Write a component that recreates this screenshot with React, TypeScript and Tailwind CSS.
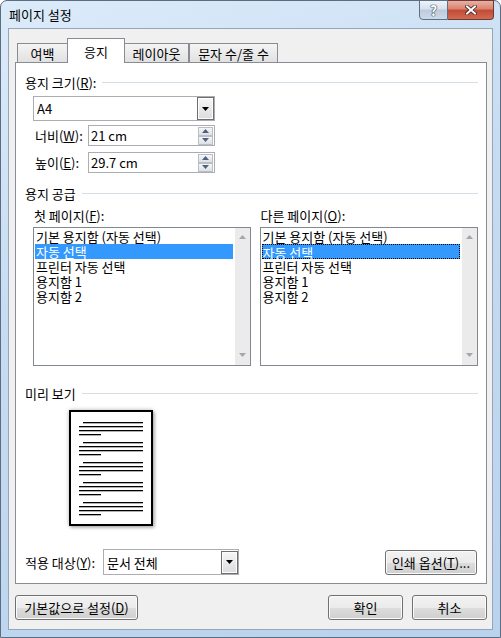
import React from "react";

const FONT = "font-['Noto_Sans_CJK_KR','Noto_Sans',sans-serif]";

const btn =
  "flex items-center justify-center h-[25px] rounded-[3px] border border-[#707070] bg-[linear-gradient(to_bottom,#f2f2f2_0%,#ebebeb_50%,#dddddd_51%,#cfcfcf_100%)] shadow-[inset_0_0_0_1px_#fbfbfb] leading-[15px]";

const paperItems = ["기본 용지함 (자동 선택)", "자동 선택", "프린터 자동 선택", "용지함 1", "용지함 2"];

function Arrow({ up = false, color = "#000" }: { up?: boolean; color?: string }) {
  return (
    <svg width="7" height="4" viewBox="0 0 7 4">
      <path d={up ? "M0 4h7L3.5 0z" : "M0 0h7L3.5 4z"} fill={color} />
    </svg>
  );
}

function GroupHeader({ children, className = "" }: { children: React.ReactNode; className?: string }) {
  return (
    <div className={`flex items-center h-[15px] ${className}`}>
      <span className="leading-[15px] whitespace-nowrap">{children}</span>
      <div className="ml-[6px] flex-1 h-px bg-[#d5dfe5]" />
    </div>
  );
}

function ComboBox({ value, className = "" }: { value: string; className?: string }) {
  return (
    <div className={`flex items-center h-[25px] border border-[#abadb3] bg-white ${className}`}>
      <span className="flex-1 pl-[3px] leading-[15px]">{value}</span>
      <div className="w-[17px] h-[23px] border border-[#6f6f6f] bg-[linear-gradient(to_bottom,#f7f7f7,#dcdcdc)] shadow-[inset_0_0_0_1px_#fdfdfd] flex items-center justify-center">
        <Arrow />
      </div>
    </div>
  );
}

function SpinBox({ value }: { value: string }) {
  const half =
    "h-[9px] border border-[#b8bfc9] bg-[linear-gradient(to_bottom,#f6f6f6,#e0e0e0)] flex items-center justify-center";
  return (
    <div className="flex w-[127px] h-[21px] border border-[#abadb3] bg-white">
      <span className="flex-1 pl-[2px] leading-[19px]">{value}</span>
      <div className="flex flex-col justify-center w-[15px] mr-px">
        <div className={half}>
          <Arrow up color="#4d6185" />
        </div>
        <div className={half}>
          <Arrow color="#4d6185" />
        </div>
      </div>
    </div>
  );
}

function ListBox({ focus = false, className = "" }: { focus?: boolean; className?: string }) {
  return (
    <div className={`flex h-[139px] border border-[#828790] bg-white ${className}`}>
      <div className="flex-1 pt-px pl-px">
        {paperItems.map((t, i) => (
          <div
            key={t}
            className={`h-[15px] leading-[15px] whitespace-nowrap ${
              i === 1 ? "bg-[#3399ff] text-white" : ""
            } ${i === 1 && focus ? "border border-dotted border-black leading-[13px]" : "pl-px"}`}
          >
            {t}
          </div>
        ))}
      </div>
      <div className="w-[15px] ml-[2px] bg-[#ebebeb] flex flex-col justify-between items-center pt-[7px] pb-[8px]">
        <Arrow up color="#a6a6a6" />
        <Arrow color="#a6a6a6" />
      </div>
    </div>
  );
}

function PagePreview() {
  return (
    <div className="ml-[44px] w-[84px] h-[116px] border-2 border-black bg-white shadow-[0_0_4px_rgba(0,0,0,0.3),2px_2px_3px_rgba(0,0,0,0.2)] pt-[10px] pl-[8px] flex flex-col gap-[7px]">
      {[0, 1, 2, 3, 4].map((g) => (
        <div key={g} className="flex flex-col gap-[3px]">
          <div className="ml-[4px] w-[60px] h-px bg-black shadow-[0_1px_0_#b0b0b0]" />
          <div className="w-[64px] h-px bg-black shadow-[0_1px_0_#b0b0b0]" />
          <div className="w-[64px] h-px bg-black shadow-[0_1px_0_#b0b0b0]" />
          <div className="w-[22px] h-px bg-black shadow-[0_1px_0_#b0b0b0]" />
        </div>
      ))}
    </div>
  );
}

export default function App() {
  const tabBase = "flex items-center justify-center border-[#898c95] leading-[15px]";
  const tabOff = "h-[19px] border-t bg-[linear-gradient(to_bottom,#f4f4f4,#e1e1e1)]";
  return (
    <div className={`w-[501px] h-[638px] bg-white ${FONT} text-[13px] text-black`}>
      <div className="w-full h-full flex flex-col rounded-t-[7px] border border-[#5c6d82] bg-[linear-gradient(160deg,#dcebfa_0%,#c6dcf2_40%,#b9d2ed_100%)]">
        {/* title bar */}
        <div className="flex items-start h-[27px]">
          <span className="ml-[8px] mt-[6px] leading-[16px]">페이지 설정</span>
          <div className="ml-auto mr-[6px] -mt-px flex h-[20px]">
            <div className="w-[29px] h-full border border-[#5f6f86] rounded-bl-[4px] bg-[linear-gradient(to_bottom,#eef3f9_0%,#d6e1ed_45%,#bccbdc_50%,#cddaea_100%)] flex items-center justify-center">
              <span className="text-white font-bold text-[14px] leading-none [text-shadow:0_0_1px_#2d3846,0_0_1px_#2d3846,0_0_1px_#2d3846]">
                ?
              </span>
            </div>
            <div className="w-[46px] h-full border border-l-0 border-[#6b3a33] rounded-br-[4px] bg-[linear-gradient(to_bottom,#eab0a3_0%,#d9826f_45%,#c24a34_50%,#d26a52_100%)] flex items-center justify-center">
              <svg width="12" height="10" viewBox="0 0 12 10">
                <path d="M2 1.5l8 7M10 1.5l-8 7" stroke="#3b2320" strokeWidth="3.6" strokeLinecap="square" />
                <path d="M2 1.5l8 7M10 1.5l-8 7" stroke="#fff" strokeWidth="2" strokeLinecap="square" />
              </svg>
            </div>
          </div>
        </div>

        {/* client area */}
        <div className="ml-[7px] w-[485px] h-[602px] border border-[#97a5b7] bg-[#f0f0f0] flex flex-col px-[6px] pt-[9px]">
          <div className="flex items-end h-[24px] pl-[2px]">
            <div className={`${tabBase} ${tabOff} w-[50px] border-l`}>여백</div>
            <div className={`${tabBase} relative z-10 h-[25px] -mb-px w-[58px] border-l border-t border-r bg-white`}>
              응지
            </div>
            <div className={`${tabBase} ${tabOff} w-[64px] border-r`}>레이아웃</div>
            <div className={`${tabBase} ${tabOff} w-[89px] border-l border-r`}>문자 수/줄 수</div>
          </div>

          <div className="w-[472px] h-[522px] border border-[#898c95] bg-white pl-[9px] pr-[8px] flex flex-col">
            <GroupHeader className="mt-[12px]">
              용지 크기(<u>R</u>):
            </GroupHeader>
            <ComboBox value="A4" className="mt-[6px] ml-[8px] w-[182px]" />
            <div className="mt-[4px] ml-[10px] flex items-center">
              <span className="w-[53px] leading-[15px]">
                너비(<u>W</u>):
              </span>
              <SpinBox value="21 cm" />
            </div>
            <div className="mt-[6px] ml-[10px] flex items-center">
              <span className="w-[53px] leading-[15px]">
                높이(<u>E</u>):
              </span>
              <SpinBox value="29.7 cm" />
            </div>

            <GroupHeader className="mt-[13px]">용지 공급</GroupHeader>
            <div className="mt-[7px] ml-[8px] flex gap-[9px]">
              <div className="w-[218px] flex flex-col">
                <span className="ml-px leading-[15px]">
                  첫 페이지(<u>F</u>):
                </span>
                <ListBox className="mt-[4px]" />
              </div>
              <div className="w-[219px] flex flex-col">
                <span className="ml-px leading-[15px]">
                  다른 페이지(<u>O</u>):
                </span>
                <ListBox focus className="mt-[4px]" />
              </div>
            </div>

            <GroupHeader className="mt-[20px]">미리 보기</GroupHeader>
            <div className="mt-[9px]">
              <PagePreview />
            </div>

            <div className="mt-[23px] flex items-center">
              <span className="w-[78px] leading-[15px]">
                적용 대상(<u>Y</u>):
              </span>
              <ComboBox value="문서 전체" className="w-[136px] h-[26px]" />
              <div className={`${btn} ml-auto mr-px w-[92px]`}>
                인쇄 옵션(<u>T</u>)...
              </div>
            </div>
          </div>

          <div className="mt-[11px] w-[472px] flex">
            <div className={`${btn} w-[123px]`}>
              기본값으로 설정(<u>D</u>)
            </div>
            <div className={`${btn} ml-auto w-[75px] border-[#3c7fb1] shadow-[inset_0_0_0_1px_#9fd6f5]`}>확인</div>
            <div className={`${btn} ml-[9px] w-[75px]`}>취소</div>
          </div>
        </div>
      </div>
    </div>
  );
}
